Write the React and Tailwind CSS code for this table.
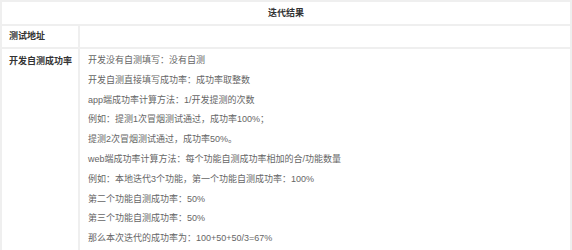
const lines = [
  '开发没有自测填写：没有自测',
  '开发自测直接填写成功率：成功率取整数',
  'app端成功率计算方法：1/开发提测的次数',
  '例如：提测1次冒烟测试通过，成功率100%；',
  '提测2次冒烟测试通过，成功率50%。',
  'web端成功率计算方法：每个功能自测成功率相加的合/功能数量',
  '例如：本地迭代3个功能，第一个功能自测成功率：100%',
  '第二个功能自测成功率：50%',
  '第三个功能自测成功率：50%',
  '那么本次迭代的成功率为：100+50+50/3=67%',
];

export default function App() {
  return (
    <div
      className="w-[572px] h-[250px] bg-white overflow-hidden text-[9px] text-[#666]"
      style={{ fontFamily: '"Liberation Sans", "Noto Sans CJK SC", sans-serif' }}
    >
      <table className="w-[572px] border-collapse table-fixed">
        <colgroup>
          <col className="w-[78px]" />
          <col />
        </colgroup>
        <tbody>
          <tr className="h-[24px]">
            <td
              colSpan={2}
              className="border-2 border-[#efefef] text-center font-bold text-[#333] leading-none"
            >
              迭代结果
            </td>
          </tr>
          <tr className="h-[23px]">
            <td className="border-2 border-[#efefef] pl-[7px] font-bold text-[#333] leading-none">
              测试地址
            </td>
            <td className="border-2 border-[#efefef]" />
          </tr>
          <tr>
            <td className="border-2 border-[#efefef] align-top pl-[7px] pt-[2px] font-bold text-[#333] leading-[20px] whitespace-nowrap">
              开发自测成功率
            </td>
            <td className="border-2 border-[#efefef] align-top pl-[8px] pt-[2px] pb-[1px]">
              {lines.map((t) => (
                <div key={t} className="leading-[19.8px] whitespace-nowrap">
                  {t}
                </div>
              ))}
            </td>
          </tr>
        </tbody>
      </table>
    </div>
  );
}
